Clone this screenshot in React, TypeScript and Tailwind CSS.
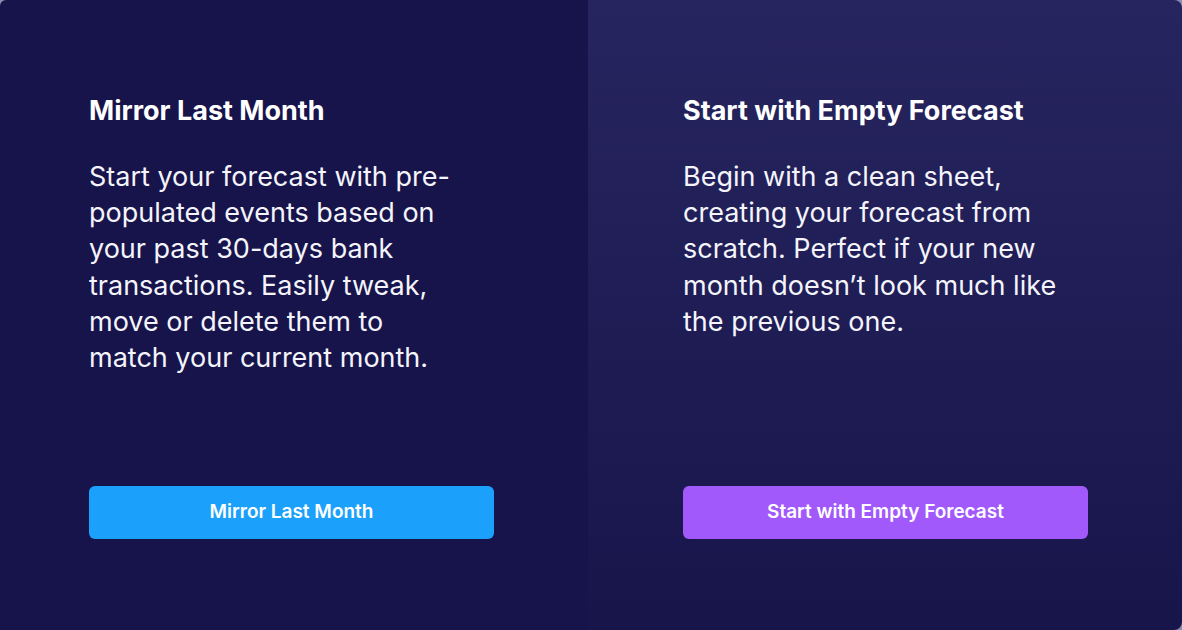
import React from "react";

function Panel({
  title,
  lines,
  button,
  btnClass,
  panelClass,
}: {
  title: string;
  lines: string[];
  button: string;
  btnClass: string;
  panelClass: string;
}) {
  return (
    <div className={`flex flex-col h-full pt-[95px] pb-[91px] ${panelClass}`}>
      <div className="w-[405px]">
        <h2 className="text-[27px] leading-[32px] font-bold text-white whitespace-nowrap">{title}</h2>
        <p className="mt-[32px] text-[27px] leading-[36.2px] font-normal text-[#f4f4fa]">
          {lines.map((l, i) => (
            <span key={i} className="block whitespace-nowrap">
              {l}
            </span>
          ))}
        </p>
      </div>
      <button
        className={`mt-auto w-[405px] h-[53px] rounded-[6px] text-white text-[19px] font-semibold flex items-center justify-center ${btnClass}`}
      >
        {button}
      </button>
    </div>
  );
}

export default function App() {
  return (
    <div
      className="w-[1182px] h-[630px] bg-[#8b8bb3]"
      style={{ fontFamily: "Inter, 'Noto Sans', sans-serif" }}
    >
      <div className="flex w-full h-full rounded-tl-[6px] rounded-tr-[8px] rounded-br-[8px] overflow-hidden">
        <div className="w-[588px] h-full bg-[#17144b]">
          <Panel
            panelClass="pl-[89px]"
            title="Mirror Last Month"
            lines={[
              "Start your forecast with pre-",
              "populated events based on",
              "your past 30-days bank",
              "transactions. Easily tweak,",
              "move or delete them to",
              "match your current month.",
            ]}
            button="Mirror Last Month"
            btnClass="bg-[#1ba1fb]"
          />
        </div>
        <div className="flex-1 h-full bg-gradient-to-b from-[#27255f] to-[#18154b]">
          <Panel
            panelClass="pl-[95px]"
            title="Start with Empty Forecast"
            lines={[
              "Begin with a clean sheet,",
              "creating your forecast from",
              "scratch. Perfect if your new",
              "month doesn’t look much like",
              "the previous one.",
            ]}
            button="Start with Empty Forecast"
            btnClass="bg-[#a259fc]"
          />
        </div>
      </div>
    </div>
  );
}
